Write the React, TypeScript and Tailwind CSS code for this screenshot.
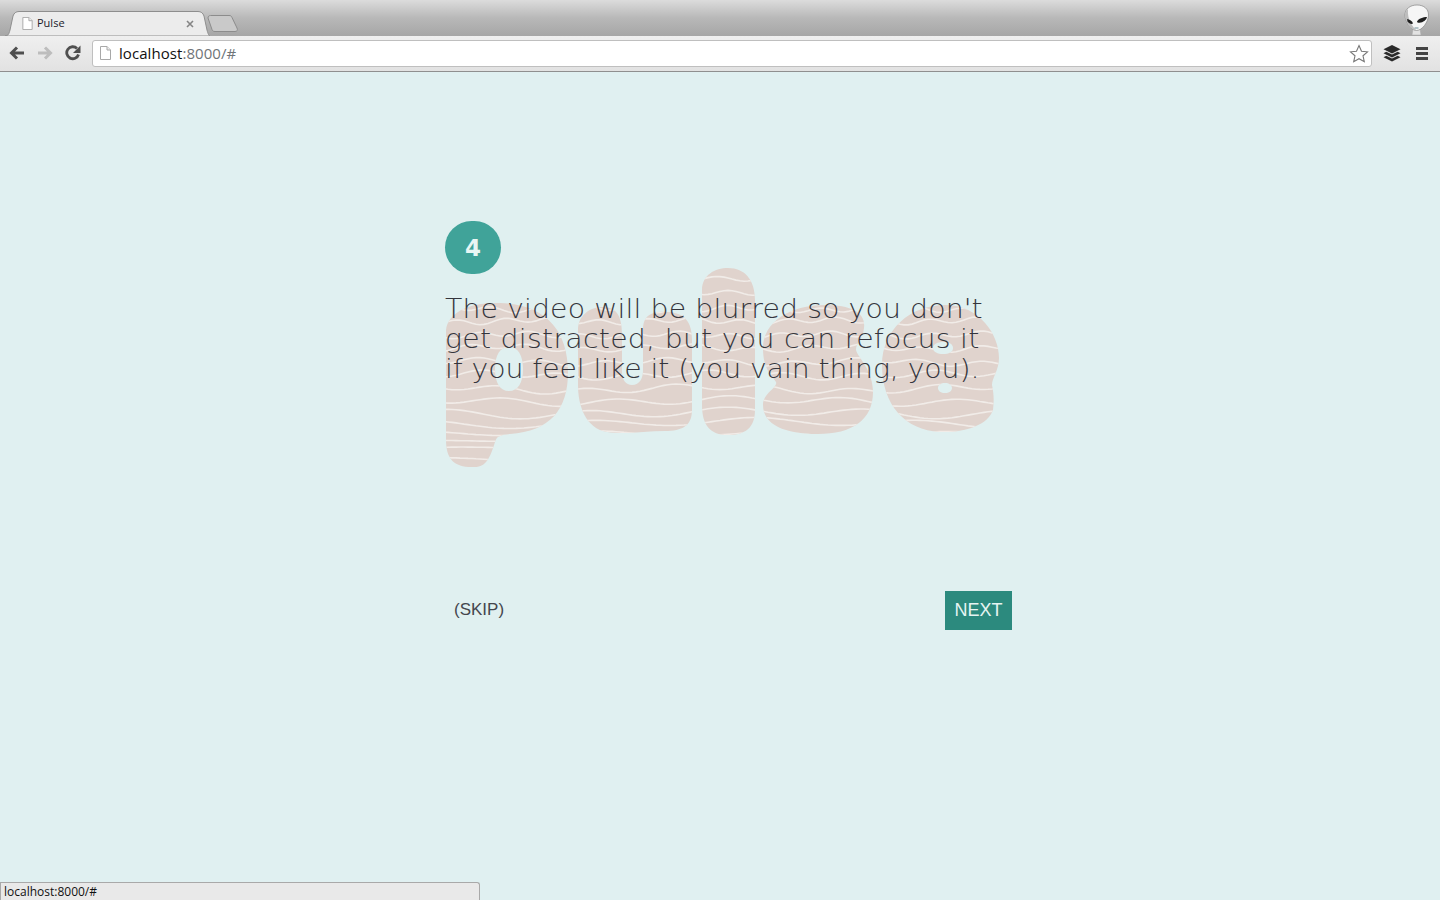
import React from "react";

const wave = (base: number, amp: number, len: number, phase: number, amp2 = 0) => {
  let d = "";
  for (let x = 440; x <= 1005; x += 4) {
    const y = base + amp * Math.sin(x / len + phase) + amp2 * Math.sin(x / (len * 3.1) + phase * 2);
    d += `${x === 440 ? "M" : "L"}${x} ${y.toFixed(1)} `;
  }
  return d;
};

const lines: [number, number, number, number, number][] = [
  [278, 2.5, 9, 0.4, 1],
  [292, 2.5, 8, 1.6, 1],
  [309, 2.5, 7.5, 2.1, 1.5],
  [321, 2.5, 7.5, 0.2, 1.5],
  [335, 2.5, 8, 1.4, 1.5],
  [348, 2.5, 9, 2.8, 2],
  [362, 2.5, 10, 0.9, 2],
  [375, 3, 12, 2.2, 2],
  [389, 3, 14, 0.5, 2.5],
  [401, 3.5, 18, 1.9, 2],
  [413, 4, 22, 3.1, 2],
  [423, 3.5, 26, 0.8, 2],
  [434, 2.5, 28, 2.4, 1],
  [441, 0.6, 40, 1, 0.5],
  [448, 1.2, 30, 2, 0.5],
  [460, 2, 30, 2.5, 0.5],
];

const blob =
  "M446 330C448 312 470 302 500 303C545 304 568 330 568 372C568 410 550 431 510 434C500 435 497 436 495 442C490 458 486 467 475 467C455 468 446 460 446 440Z" +
  "M495 369C495 355 500 347 509 347C518 347 523 355 523 369C523 383 518 391 509 391C500 391 495 383 495 369Z" +
  "M578 330C578 315 590 307 603 307C618 307 622 318 622 335L622 372C622 380 626 385 632 385C640 385 643 378 643 370L643 330C643 315 652 311 668 312C685 313 692 322 692 340L692 410C692 426 682 431 665 431C645 431 625 435 607 432C585 428 578 405 578 385Z" +
  "M702 290C702 275 715 268 728 268C745 268 755 280 755 300L755 410C755 428 745 435 728 435C710 435 702 425 702 405Z" +
  "M763 348C763 322 790 305 825 305C852 305 866 313 864 328C863 340 856 342 856 350C858 358 873 370 873 392C873 420 852 434 818 434C785 434 763 425 763 405C763 393 778 388 776 382C772 375 763 370 763 348Z" +
  "M882 365C882 330 910 305 945 305C980 305 999 335 999 358C999 370 992 378 992 385C994 395 994 400 993 410C988 425 965 433 940 432C905 430 882 405 882 365Z" +
  "M933 348C933 344 938 342 943 342C949 342 953 344 953 348C953 352 949 354 943 354C938 354 933 352 933 348Z" +
  "M938 388C938 385 941 383 945 383C949 383 952 385 952 388C952 391 949 393 945 393C941 393 938 391 938 388Z";

function Logo() {
  return (
    <svg className="absolute left-0 top-0" width="600" height="450" viewBox="420 180 600 450" aria-hidden="true">
      <defs>
        <clipPath id="pulse-clip">
          <path d={blob} clipRule="evenodd" />
        </clipPath>
      </defs>
      <path d={blob} fill="#e0d3cd" fillRule="evenodd" />
      <g clipPath="url(#pulse-clip)" fill="none" stroke="#f1ece8" strokeWidth="1.6">
        {lines.map((l, i) => (
          <path key={i} d={wave(l[0], l[1], l[2], l[3], l[4])} />
        ))}
      </g>
    </svg>
  );
}

function DocIcon({ w, h }: { w: number; h: number }) {
  return (
    <svg width={w} height={h} viewBox="0 0 11 14" aria-hidden="true">
      <path d="M.5.5H7L10.500 4V13.500H.5Z" fill="#fff" stroke="#a8a8a8" />
      <path d="M7 .5V4H10.500" fill="#eee" stroke="#a8a8a8" />
    </svg>
  );
}

function Alien() {
  return (
    <svg width="30" height="32" viewBox="0 0 30 32" aria-hidden="true">
      <path d="M11 25L10 31H19L18 25Z" fill="#e2e2e2" stroke="#a8a8a8" strokeWidth=".5" />
      <path d="M15 1C22 1 26.500 5 26.500 11C26.500 18 20 26.500 14.500 26.500C9 26.500 3 18 3 11C3 5 8 1 15 1Z" fill="#f6f6f6" stroke="#777" strokeWidth=".6" />
      <path d="M3 11C3 18 9 26.500 14.500 26.500C11 23 5 16 6 5C4 7 3 9 3 11Z" fill="#bdbdbd" />
      <path d="M15 17.500C16.500 14.500 21 13 25 13C24.500 16 21 18.500 17.500 18.800C16 18.900 15 18.500 15 17.500Z" fill="#202020" />
      <path d="M5 15C7.500 15.500 10.500 17 11 19.500C9.500 20.500 7 19.500 5.500 17.500Z" fill="#202020" />
      <path d="M12.500 24H16.500" stroke="#6f8f98" strokeWidth="1" />
    </svg>
  );
}

export default function App() {
  return (
    <div className="relative flex h-screen w-full flex-col overflow-hidden bg-[#e0f0f1] font-['Liberation_Sans',sans-serif]">
      {/* Tab strip */}
      <div className="relative flex h-9 shrink-0 items-end bg-gradient-to-b from-[#dcdcdc] via-[#b8b8b8] to-[#a6a6a6] pl-[5px]">
        <div className="relative h-[25px] w-[205px]">
          <svg className="absolute inset-0" width="205" height="25" viewBox="0 0 205 25" aria-hidden="true">
            <path d="M0 25C3 25 4 23 5 19L8 5C9 2 11 .5 14 .5H193C196 .5 198 2 199 5L202 19C203 23 204 25 205 25Z" fill="#ececec" stroke="#8e8e8e" />
          </svg>
          <div className="relative flex h-full items-center pl-[17px] pr-[16px]">
            <DocIcon w={11} h={13} />
            <span className="ml-[4px] font-['Open_Sans',sans-serif] text-[11px] text-[#1a1a2a]">Pulse</span>
            <svg className="ml-auto" width="8" height="8" viewBox="0 0 8 8" aria-hidden="true">
              <path d="M1 1L7 7M7 1L1 7" stroke="#858585" strokeWidth="1.6" />
            </svg>
          </div>
        </div>
        <svg className="mb-[4px] -ml-[3px]" width="32" height="17" viewBox="0 0 32 17" aria-hidden="true">
          <path d="M1 3C1 1.500 2 .5 3.500 .5H22C23.500 .5 24.500 1 25 2.500L30 13C31 15 30 16.500 28 16.500H8C6.500 16.500 5.500 16 5 14.500Z" fill="#c9c9c9" stroke="#8c8c8c" />
        </svg>
        <div className="absolute right-[8px] top-[4px]">
          <Alien />
        </div>
      </div>

      {/* Toolbar */}
      <div className="flex h-9 shrink-0 items-center border-b border-[#8f8f8f] bg-gradient-to-b from-[#efefef] to-[#e2e2e2] pb-[1px] pl-[9px] pr-[12px]">
        <svg width="16" height="14" viewBox="0 0 16 14" aria-hidden="true">
          <path d="M15 7H3M8 1.500L2.500 7L8 12.500" fill="none" stroke="#4f4f4f" strokeWidth="3" />
        </svg>
        <svg className="ml-[12px]" width="16" height="14" viewBox="0 0 16 14" aria-hidden="true">
          <path d="M1 7H13M8 1.500L13.500 7L8 12.500" fill="none" stroke="#bdbdbd" strokeWidth="3" />
        </svg>
        <svg className="ml-[12px]" width="16" height="16" viewBox="0 0 16 16" aria-hidden="true">
          <path d="M13.500 9.500A6 6 0 1 1 12 3.500" fill="none" stroke="#4f4f4f" strokeWidth="2.800" />
          <path d="M15.500 .5V8H8Z" fill="#4f4f4f" />
        </svg>
        <div className="ml-[11px] flex h-[27px] w-[1280px] items-center rounded-[3px] border border-[#bfbfbf] bg-white pl-[7px] pr-[2px]">
          <DocIcon w={11} h={14} />
          <span className="ml-[8px] font-['Open_Sans',sans-serif] text-[15px] tracking-[0.06px] text-[#111]">
            localhost<span className="text-[#6f7478]">:8000/#</span>
          </span>
          <svg className="ml-auto" width="20" height="19" viewBox="0 0 20 19" aria-hidden="true">
            <path d="M10 1.500L12.500 7.200L18.500 7.800L14 11.800L15.300 17.700L10 14.700L4.700 17.700L6 11.800L1.500 7.800L7.500 7.200Z" fill="#fff" stroke="#777" strokeWidth="1.100" />
          </svg>
        </div>
        <svg className="ml-[11px]" width="18" height="17" viewBox="0 0 18 17" aria-hidden="true">
          <path d="M9 0L17.500 4.200L9 8.400L.5 4.200Z" fill="#2a2a2a" />
          <path d="M3.300 6.800L9 9.600L14.700 6.800L17.500 8.300L9 12.500L.5 8.300Z" fill="#2a2a2a" />
          <path d="M3.300 10.800L9 13.600L14.700 10.800L17.500 12.300L9 16.500L.5 12.300Z" fill="#2a2a2a" />
        </svg>
        <div className="ml-auto flex flex-col gap-[2px]">
          <div className="h-[3px] w-[12px] bg-[#444]" />
          <div className="h-[3px] w-[12px] bg-[#444]" />
          <div className="h-[3px] w-[12px] bg-[#444]" />
        </div>
      </div>

      {/* Page */}
      <div className="flex flex-1 justify-center pt-[108px]">
        <div className="relative flex h-[450px] w-[600px] flex-col bg-[#e0f0f0]">
          <Logo />
          <div className="relative flex flex-1 flex-col pl-[25px] pt-[41px]">
            <div className="flex h-[53px] w-[56px] items-center justify-center rounded-full bg-[#40a399] pt-[1px] font-['DejaVu_Sans',sans-serif] text-[23px] font-bold text-[#e8f6f4]">
              4
            </div>
            <p className="mt-[20px] origin-left scale-x-[1.09] whitespace-nowrap font-['DejaVu_Sans',sans-serif] text-[26px] font-extralight leading-[30px] text-[#34353c]">
              <span className="tracking-[0.1px]">The video will be blurred so you don't</span>
              <br />
              <span className="tracking-[0.24px]">get distracted, but you can refocus it</span>
              <br />
              <span className="tracking-[-0.09px]">if you feel like it (you vain thing, you).</span>
            </p>
          </div>
          <div className="relative flex h-[39px] items-center justify-between pl-[34px] pr-2">
            <span className="mb-[2px] text-[17px] text-[#45464d]">(SKIP)</span>
            <div className="flex h-[39px] w-[67px] items-center justify-center bg-[#2c8a7e] pb-[1px] text-[18px] text-[#e6f4f2]">
              NEXT
            </div>
          </div>
        </div>
      </div>

      {/* Status bubble */}
      <div className="absolute bottom-0 left-0 flex h-[18px] w-[480px] items-center rounded-tr-[3px] border border-b-0 border-[#a9a9a9] bg-[#e9e9e9] pl-[3px] font-['Open_Sans',sans-serif] text-[12px] text-[#111]">
        localhost:8000/#
      </div>
    </div>
  );
}
